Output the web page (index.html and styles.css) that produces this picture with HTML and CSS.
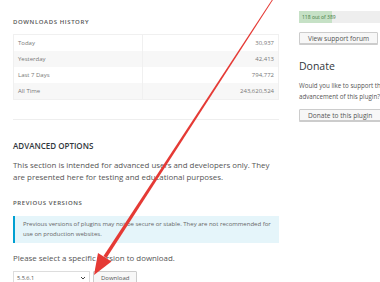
FILE: index.html
```html
<!DOCTYPE html>
<html>
<head>
<link rel="stylesheet" href="styles.css">
</head>
<body>

<div class="page">
  <div class="main">
    <h3 class="section-title">Downloads History</h3>
    <table class="history">
      <tr><td>Today</td><td class="num">30,937</td></tr>
      <tr><td>Yesterday</td><td class="num">42,413</td></tr>
      <tr><td>Last 7 Days</td><td class="num">794,772</td></tr>
      <tr><td>All Time</td><td class="num">243,620,524</td></tr>
    </table>

    <hr class="divider">

    <h2 class="advanced-title">ADVANCED OPTIONS</h2>
    <p class="intro">This section is intended for advanced users and developers only. They are presented here for testing and educational purposes.</p>

    <h3 class="section-title">Previous Versions</h3>
    <div class="notice">Previous versions of plugins may not be secure or stable. They are not recommended for use on production websites.</div>

    <p class="select-label">Please select a specific version to download.</p>
    <div class="download-row">
      <div class="version-select">
        <span>5.5.6.1</span>
        <svg width="6" height="4" viewBox="0 0 6 4"><path d="M1 1l2 2 2-2" fill="none" stroke="#444" stroke-width="1"/></svg>
      </div>
      <button class="btn">Download</button>
    </div>
  </div>

  <div class="sidebar">
    <p class="cut-text">Issues resolved in last two months:</p>
    <div class="progress">
      <div class="progress-fill" style="width: 30.3%"></div>
      <span class="progress-text">118 out of 389</span>
    </div>
    <button class="btn side-btn">View support forum</button>

    <h2 class="donate-title">Donate</h2>
    <p class="donate-text">Would you like to support the advancement of this plugin?</p>
    <button class="btn side-btn">Donate to this plugin</button>
  </div>
</div>

<svg class="arrow" width="380" height="282" viewBox="0 0 380 282">
  <polygon points="272.6,-1.2 273.4,-0.8 106.5,258 103.5,256" fill="#e53a35"/>
  <polygon points="94,275 98,253 111.5,261.5" fill="#e53a35"/>
</svg>

</body>
</html>
```

FILE: styles.css
```css
body {
  margin: 0;
  background: #fff;
  font-family: "Open Sans", "Noto Sans", sans-serif;
  color: #555;
  overflow: hidden;
}

.page {
  display: flex;
  gap: 20px;
  padding-left: 13px;
}

.main {
  width: 266px;
  flex-shrink: 0;
  padding-top: 17px;
}

.section-title {
  margin: 0;
  font-size: 6px;
  line-height: 10px;
  font-weight: 600;
  text-transform: uppercase;
  letter-spacing: 0.1em;
  color: #555;
}

.history {
  width: 100%;
  margin-top: 7px;
  border-collapse: collapse;
  border: 1px solid #f0f0f0;
  font-size: 6px;
  color: #777;
}

.history td {
  height: 16px;
  padding: 0 4px;
  border-left: 1px solid #f0f0f0;
}

.history td:first-child {
  width: 120px;
}

.history tr:nth-child(even) {
  background: #f7f7f7;
}

.history .num {
  text-align: right;
}

.divider {
  margin: 19px 0 0;
  border: none;
  border-top: 1px solid #eee;
}

.advanced-title {
  margin: 20px 0 0;
  font-size: 8px;
  line-height: 12px;
  font-weight: 600;
  color: #32373c;
}

.intro {
  margin: 8px 0 0;
  font-size: 7.9px;
  line-height: 11.5px;
  color: #555;
}

.main .section-title {
  margin-top: 15px;
}

.main .section-title:first-child {
  margin-top: 0;
}

.notice {
  margin-top: 8px;
  padding: 3px 8px 4px 8px;
  background: #e5f5fa;
  border-left: 2px solid #00a0d2;
  font-size: 6px;
  line-height: 10px;
  color: #666;
}

.select-label {
  margin: 9px 0 0;
  font-size: 7.9px;
  line-height: 12px;
  color: #555;
}

.download-row {
  display: flex;
  gap: 3px;
  margin-top: 7px;
}

.version-select {
  box-sizing: border-box;
  width: 77px;
  height: 13px;
  padding: 0 3px;
  display: flex;
  align-items: center;
  justify-content: space-between;
  border: 1px solid #ddd;
  font-size: 5.6px;
  color: #555;
}

.btn {
  box-sizing: border-box;
  height: 13px;
  padding: 0 7px;
  border: 1px solid #ccc;
  border-radius: 1px;
  background: #f7f7f7;
  font-family: "Open Sans", "Noto Sans", sans-serif;
  font-size: 6px;
  color: #555;
  box-shadow: 0 1px 0 #ccc;
}

.sidebar {
  width: 110px;
  flex-shrink: 0;
}

.cut-text {
  margin: -6px 0 0;
  font-size: 6px;
  line-height: 8px;
  color: #888;
  white-space: nowrap;
}

.progress {
  position: relative;
  height: 12px;
  margin-top: 9px;
  background: #eee;
}

.progress-fill {
  height: 100%;
  background: #c6e1c6;
}

.progress-text {
  position: absolute;
  left: 3px;
  top: 0;
  font-size: 5px;
  line-height: 12px;
  color: #3d7a3d;
}

.side-btn {
  display: block;
  height: 12px;
  margin-top: 9px;
  padding: 0 8px;
  font-size: 6.6px;
}

.donate-title {
  margin: 15px 0 0;
  font-size: 10.5px;
  line-height: 14px;
  font-weight: 400;
  color: #32373c;
}

.donate-text {
  margin: 8px 0 0;
  font-size: 6.2px;
  line-height: 10.5px;
  color: #555;
}

.sidebar .side-btn:last-child {
  margin-top: 7px;
}

.arrow {
  position: absolute;
  left: 0;
  top: 0;
}
```
